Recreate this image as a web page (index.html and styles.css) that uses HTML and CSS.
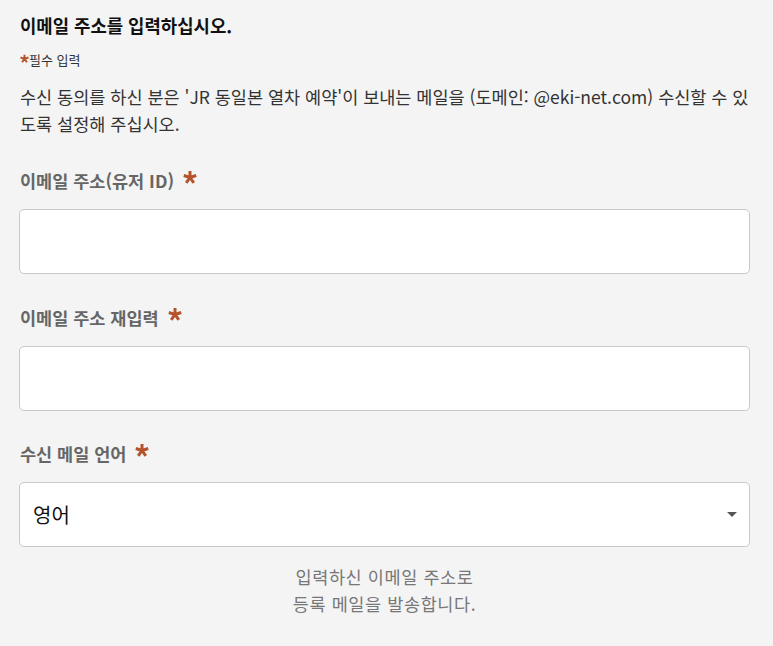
FILE: index.html
```html
<!DOCTYPE html>
<html lang="ko">
<head>
<meta charset="utf-8">
<link rel="stylesheet" href="styles.css">
</head>
<body>
<div class="page">
  <h1 class="title">이메일 주소를 입력하십시오.</h1>
  <p class="required-note"><svg class="star-small" viewBox="0 0 14 14" aria-hidden="true"><path d="M7 7.5V1M7 7.5L13.2 5.5M7 7.5L10.8 12.8M7 7.5L3.2 12.8M7 7.5L0.8 5.5"/></svg>필수 입력</p>
  <p class="desc">수신 동의를 하신 분은 'JR 동일본 열차 예약'이 보내는 메일을 (도메인: @eki-net.com) 수신할 수 있도록 설정해 주십시오.</p>

  <div class="field">
    <label class="label">이메일 주소(유저 ID) <svg class="star" viewBox="0 0 14 14" aria-hidden="true"><path d="M7 7.5V1M7 7.5L13.2 5.5M7 7.5L10.8 12.8M7 7.5L3.2 12.8M7 7.5L0.8 5.5"/></svg></label>
    <input class="input" type="text">
  </div>

  <div class="field">
    <label class="label">이메일 주소 재입력 <svg class="star" viewBox="0 0 14 14" aria-hidden="true"><path d="M7 7.5V1M7 7.5L13.2 5.5M7 7.5L10.8 12.8M7 7.5L3.2 12.8M7 7.5L0.8 5.5"/></svg></label>
    <input class="input" type="text">
  </div>

  <div class="field field-last">
    <label class="label">수신 메일 언어 <svg class="star" viewBox="0 0 14 14" aria-hidden="true"><path d="M7 7.5V1M7 7.5L13.2 5.5M7 7.5L10.8 12.8M7 7.5L3.2 12.8M7 7.5L0.8 5.5"/></svg></label>
    <div class="select">
      <span class="select-value">영어</span>
      <span class="caret"></span>
    </div>
  </div>

  <p class="footnote">입력하신 이메일 주소로<br>등록 메일을 발송합니다.</p>
</div>
</body>
</html>
```

FILE: styles.css
```css
html, body {
  margin: 0;
  padding: 0;
  background: #f4f4f4;
}
body {
  font-family: "Noto Sans CJK KR", "Noto Sans", sans-serif;
  color: #222;
}
.page {
  padding: 10px 23px 0 19px;
}
.title {
  margin: 0;
  font-size: 17.8px;
  font-weight: 700;
  line-height: 30px;
  color: #111;
  padding-left: 1px;
}
.required-note {
  margin: 10px 0 0;
  font-size: 13px;
  line-height: 20px;
  color: #333;
  padding-left: 1px;
  display: flex;
  align-items: center;
}
.star-small {
  width: 9px;
  height: 9px;
  margin-top: -3px;
  stroke: #b5532a;
  stroke-width: 3;
  fill: none;
}
.desc {
  margin: 13px 0 0;
  font-size: 17.5px;
  line-height: 27px;
  color: #333;
  padding-left: 1px;
}
.field {
  margin-top: 32px;
  display: flex;
  flex-direction: column;
}
.field + .field {
  margin-top: 32px;
}
.field + .field-last {
  margin-top: 31px;
}
.label {
  font-size: 17.5px;
  font-weight: 700;
  color: #666;
  line-height: 24px;
  padding-left: 1px;
  margin-bottom: 16px;
  display: flex;
  align-items: center;
}
.star {
  width: 14px;
  height: 14px;
  margin-left: 9px;
  margin-top: -8px;
  stroke: #b5532a;
  stroke-width: 3;
  fill: none;
}
.input {
  box-sizing: border-box;
  height: 65px;
  width: 100%;
  margin: 0;
  border: 1px solid #c9c9c9;
  border-radius: 5px;
  background: #fff;
  font: inherit;
}
.select {
  box-sizing: border-box;
  height: 65px;
  border: 1px solid #c9c9c9;
  border-radius: 5px;
  background: #fff;
  display: flex;
  align-items: center;
  justify-content: space-between;
  padding: 0 12px 0 13px;
}
.select-value {
  font-size: 20px;
  color: #111;
}
.caret {
  width: 0;
  height: 0;
  border-left: 5px solid transparent;
  border-right: 5px solid transparent;
  border-top: 5px solid #555;
}
.footnote {
  margin: 16px 0 0;
  text-align: center;
  font-size: 17.5px;
  letter-spacing: 0.6px;
  line-height: 27px;
  color: #777;
}
```
